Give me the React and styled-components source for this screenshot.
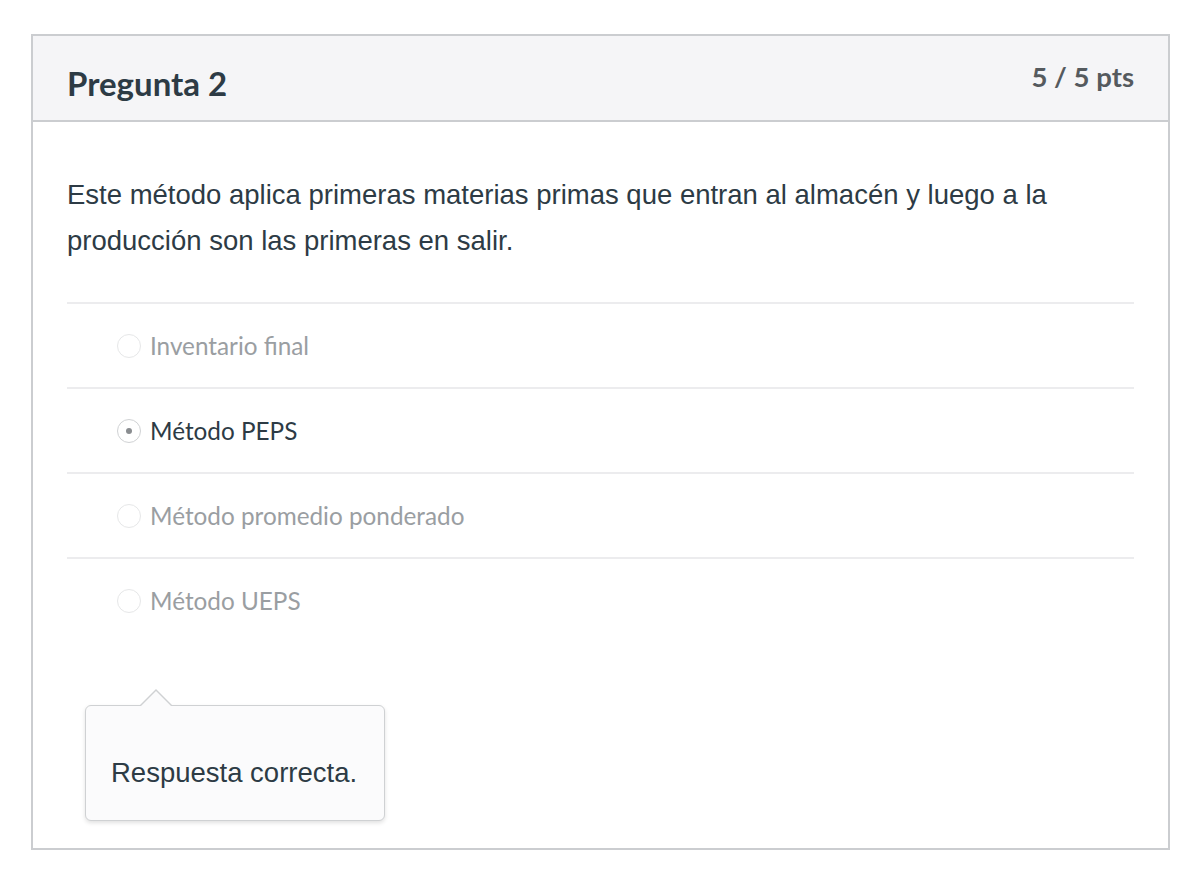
import React from "react";
import styled, { createGlobalStyle } from "styled-components";

const Global = createGlobalStyle`
  html, body { margin: 0; padding: 0; background: #ffffff; }
  body { font-family: Lato, "Liberation Sans", sans-serif; }
`;

const Page = styled.div`
  padding: 34px 30px 0 31px;
`;

const Card = styled.section`
  border: 2px solid #cbcdd0;
  background: #ffffff;
  height: 816px;
  box-sizing: border-box;
  display: flex;
  flex-direction: column;
`;

const Header = styled.header`
  display: flex;
  justify-content: space-between;
  align-items: flex-start;
  background: #f5f5f7;
  border-bottom: 2px solid #cbcdd0;
  height: 86px;
  box-sizing: border-box;
  padding: 0 34px 0 34px;
`;

const Title = styled.h2`
  margin: 0;
  padding-top: 27px;
  font-family: Lato, sans-serif;
  font-weight: 700;
  font-size: 33px;
  line-height: 40px;
  color: #2d3b45;
`;

const Points = styled.div`
  padding-top: 24px;
  font-family: Lato, sans-serif;
  font-weight: 700;
  font-size: 27.5px;
  line-height: 34px;
  color: #555a5e;
`;

const Body = styled.div`
  padding: 50px 34px 0 34px;
  display: flex;
  flex-direction: column;
`;

const Question = styled.p`
  margin: 0 0 38px 0;
  font-family: "Liberation Sans", Arial, sans-serif;
  font-size: 27.5px;
  line-height: 46px;
  color: #2d3b45;
`;

const AnswerList = styled.div`
  display: flex;
  flex-direction: column;
`;

const Answer = styled.label`
  display: flex;
  align-items: center;
  gap: 9px;
  height: 85px;
  box-sizing: border-box;
  border-top: 2px solid #ececee;
  padding-left: 50px;
  font-family: Lato, sans-serif;
  font-size: 24.3px;
  color: ${(p) => (p.$selected ? "#2d3b45" : "#9a9ea2")};
`;

const Radio = styled.span`
  width: 24px;
  height: 24px;
  border-radius: 50%;
  border: 1.5px solid ${(p) => (p.$selected ? "#d0d2d4" : "#e6e7e8")};
  box-sizing: border-box;
  display: flex;
  align-items: center;
  justify-content: center;
  background: #ffffff;
  &::after {
    content: "";
    width: 6px;
    height: 6px;
    border-radius: 50%;
    background: ${(p) => (p.$selected ? "#8a8d90" : "transparent")};
  }
`;

const Popover = styled.div`
  position: relative;
  margin: 63px 0 0 18px;
  width: 300px;
  height: 116px;
  box-sizing: border-box;
  border: 1.5px solid #cfd1d3;
  border-radius: 6px;
  background: #fbfbfc;
  box-shadow: 0 2px 4px rgba(0, 0, 0, 0.12);
  display: flex;
  align-items: center;
  padding: 20px 0 0 25px;
  font-family: "Liberation Sans", Arial, sans-serif;
  font-size: 27.5px;
  color: #2d3b45;

  &::before,
  &::after {
    content: "";
    position: absolute;
    left: 54px;
    width: 0;
    height: 0;
    border-left: 16px solid transparent;
    border-right: 16px solid transparent;
  }
  &::before {
    top: -17px;
    border-bottom: 16px solid #cfd1d3;
  }
  &::after {
    top: -15px;
    border-bottom: 16px solid #fbfbfc;
  }
`;

const answers = [
  { text: "Inventario final", selected: false },
  { text: "Método PEPS", selected: true },
  { text: "Método promedio ponderado", selected: false },
  { text: "Método UEPS", selected: false },
];

export default function App() {
  return (
    <>
      <Global />
      <Page>
        <Card>
          <Header>
            <Title>Pregunta 2</Title>
            <Points>5 / 5 pts</Points>
          </Header>
          <Body>
            <Question>
              Este método aplica primeras materias primas que entran al almacén y luego a la
              producción son las primeras en salir.
            </Question>
            <AnswerList>
              {answers.map((a) => (
                <Answer key={a.text} $selected={a.selected}>
                  <Radio $selected={a.selected} />
                  {a.text}
                </Answer>
              ))}
            </AnswerList>
            <Popover>Respuesta correcta.</Popover>
          </Body>
        </Card>
      </Page>
    </>
  );
}
